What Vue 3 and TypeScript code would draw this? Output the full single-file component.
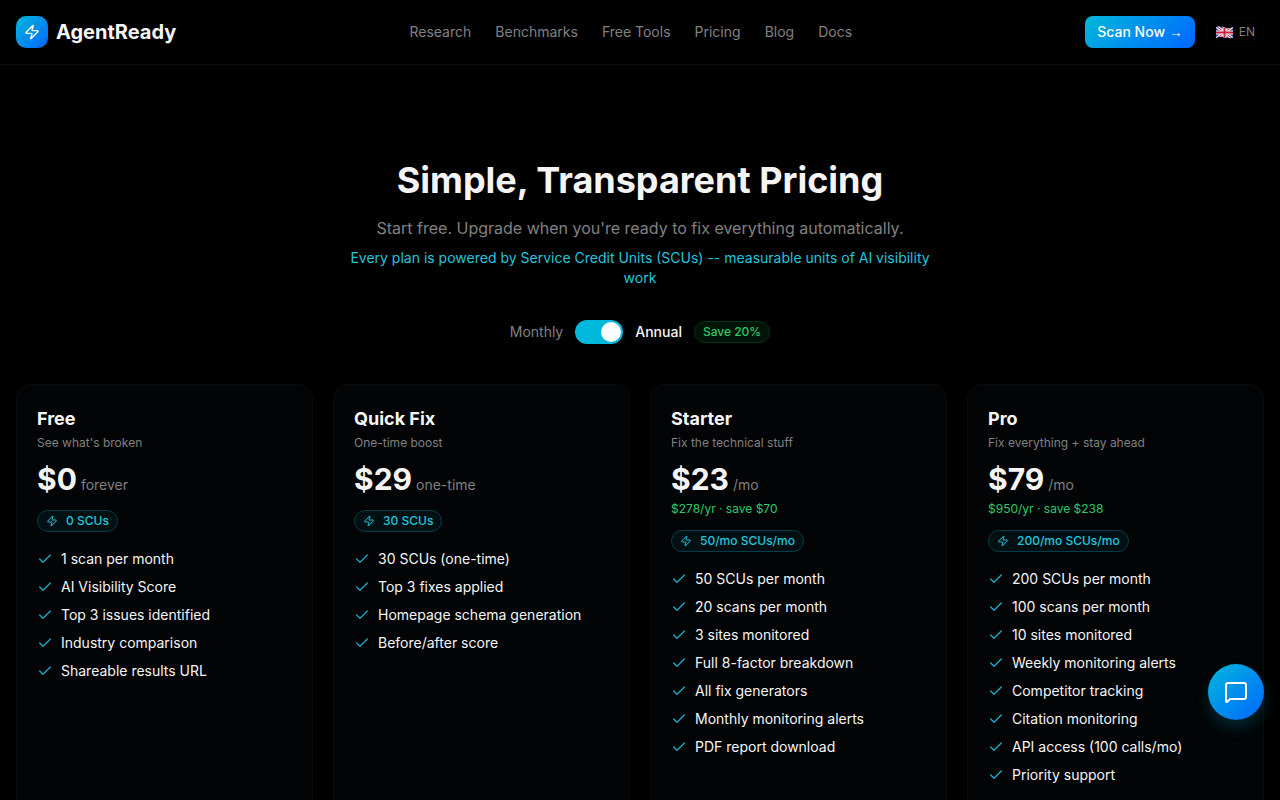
<script setup lang="ts">
import { ref } from 'vue'

interface Plan {
  name: string
  tagline: string
  monthly: string
  annual: string
  period: string
  yearly?: string
  units: string
  features: string[]
}

const annual = ref(true)

const links = ['Research', 'Benchmarks', 'Free Tools', 'Pricing', 'Blog', 'Docs']

const plans: Plan[] = [
  {
    name: 'Free',
    tagline: "See what's broken",
    monthly: '$0',
    annual: '$0',
    period: 'forever',
    units: '0 SCUs',
    features: [
      '1 scan per month',
      'AI Visibility Score',
      'Top 3 issues identified',
      'Industry comparison',
      'Shareable results URL',
    ],
  },
  {
    name: 'Quick Fix',
    tagline: 'One-time boost',
    monthly: '$29',
    annual: '$29',
    period: 'one-time',
    units: '30 SCUs',
    features: [
      '30 SCUs (one-time)',
      'Top 3 fixes applied',
      'Homepage schema generation',
      'Before/after score',
    ],
  },
  {
    name: 'Starter',
    tagline: 'Fix the technical stuff',
    monthly: '$29',
    annual: '$23',
    period: '/mo',
    yearly: '$278/yr · save $70',
    units: '50/mo SCUs/mo',
    features: [
      '50 SCUs per month',
      '20 scans per month',
      '3 sites monitored',
      'Full 8-factor breakdown',
      'All fix generators',
      'Monthly monitoring alerts',
      'PDF report download',
    ],
  },
  {
    name: 'Pro',
    tagline: 'Fix everything + stay ahead',
    monthly: '$99',
    annual: '$79',
    period: '/mo',
    yearly: '$950/yr · save $238',
    units: '200/mo SCUs/mo',
    features: [
      '200 SCUs per month',
      '100 scans per month',
      '10 sites monitored',
      'Weekly monitoring alerts',
      'Competitor tracking',
      'Citation monitoring',
      'API access (100 calls/mo)',
      'Priority support',
    ],
  },
]

const zap =
  'M4 14a1 1 0 0 1-.78-1.63l9.9-10.2a.5.5 0 0 1 .86.46l-1.92 6.02A1 1 0 0 0 13 10h7a1 1 0 0 1 .78 1.63l-9.9 10.2a.5.5 0 0 1-.86-.46l1.92-6.02A1 1 0 0 0 11 14z'
</script>

<template>
  <div class="page">
    <header class="header">
      <a class="brand" href="#">
        <span class="brand-mark">
          <svg class="icon icon-16" viewBox="0 0 24 24" aria-hidden="true"><path :d="zap" /></svg>
        </span>
        AgentReady
      </a>
      <nav class="nav">
        <a v-for="link in links" :key="link" href="#">{{ link }}</a>
      </nav>
      <div class="actions">
        <a class="scan" href="#">Scan Now <span class="arrow">→</span></a>
        <button class="lang" type="button">
          <svg class="flag" viewBox="0 0 34 26" aria-hidden="true">
            <clipPath id="flag-shape">
              <path d="M0 3C6 -1 11 1 17 3S28 5 34 2V23C28 26 23 25 17 23S6 20 0 24Z" />
            </clipPath>
            <g clip-path="url(#flag-shape)">
              <rect width="34" height="26" fill="#2a3f8f" />
              <path d="M0 0 34 26M34 0 0 26" stroke="#f4f4f6" stroke-width="6" />
              <path d="M0 0 34 26M34 0 0 26" stroke="#d0203a" stroke-width="2" />
              <path d="M17 0V26M0 13H34" stroke="#f4f4f6" stroke-width="8" />
              <path d="M17 0V26M0 13H34" stroke="#d0203a" stroke-width="4" />
            </g>
          </svg>
          EN
        </button>
      </div>
    </header>

    <main class="main">
      <section class="intro">
        <h1>Simple, Transparent Pricing</h1>
        <p class="lead">Start free. Upgrade when you're ready to fix everything automatically.</p>
        <p class="note">
          Every plan is powered by Service Credit Units (SCUs) -- measurable units of AI visibility work
        </p>
      </section>

      <div class="billing">
        <span :class="{ active: !annual }">Monthly</span>
        <button
          class="switch"
          :class="{ on: annual }"
          type="button"
          role="switch"
          :aria-checked="annual"
          aria-label="Annual"
          @click="annual = !annual"
        >
          <span class="knob"></span>
        </button>
        <span :class="{ active: annual }">Annual</span>
        <span class="save">Save 20%</span>
      </div>

      <section class="plans">
        <article v-for="plan in plans" :key="plan.name" class="card">
          <h2>{{ plan.name }}</h2>
          <p class="tagline">{{ plan.tagline }}</p>
          <p class="price">
            <strong>{{ annual ? plan.annual : plan.monthly }}</strong>
            <span>{{ plan.period }}</span>
          </p>
          <p v-if="annual && plan.yearly" class="yearly">{{ plan.yearly }}</p>
          <p class="units">
            <svg class="icon icon-12" viewBox="0 0 24 24" aria-hidden="true"><path :d="zap" /></svg>
            {{ plan.units }}
          </p>
          <ul class="features">
            <li v-for="feature in plan.features" :key="feature">
              <svg class="icon icon-16 tick" viewBox="0 0 24 24" aria-hidden="true">
                <path d="M20 6 9 17l-5-5" />
              </svg>
              {{ feature }}
            </li>
          </ul>
        </article>
      </section>
    </main>

    <button class="chat" type="button" aria-label="Chat">
      <svg class="icon icon-24" viewBox="0 0 24 24" aria-hidden="true">
        <path
          d="M22 17a2 2 0 0 1-2 2H6.828a2 2 0 0 0-1.414.586l-2.202 2.202A.71.71 0 0 1 2 21.286V5a2 2 0 0 1 2-2h16a2 2 0 0 1 2 2z"
        />
      </svg>
    </button>
  </div>
</template>

<style>
body {
  margin: 0;
  background: #000;
}
</style>

<style scoped>
.page {
  min-height: 100vh;
  background: #000;
  color: #f5f5f5;
  font-family: Inter, "Liberation Sans", sans-serif;
  font-size: 14px;
  line-height: 20px;
}

h1,
h2,
p,
ul {
  margin: 0;
  padding: 0;
}

a {
  color: inherit;
  text-decoration: none;
}

button {
  border: 0;
  padding: 0;
  color: inherit;
  font: inherit;
  cursor: pointer;
}

.icon {
  flex: none;
  fill: none;
  stroke: currentColor;
  stroke-width: 2;
  stroke-linecap: round;
  stroke-linejoin: round;
}

.icon-12 {
  width: 12px;
  height: 12px;
}

.icon-16 {
  width: 16px;
  height: 16px;
}

.icon-24 {
  width: 24px;
  height: 24px;
}

.header {
  display: flex;
  align-items: center;
  justify-content: space-between;
  height: 64px;
  padding: 0 16px;
  border-bottom: 1px solid #0d0d0d;
}

.brand {
  display: flex;
  align-items: center;
  gap: 8px;
  font-size: 20px;
  font-weight: 700;
  line-height: 28px;
}

.brand-mark {
  display: flex;
  align-items: center;
  justify-content: center;
  width: 32px;
  height: 32px;
  border-radius: 10px;
  background: linear-gradient(135deg, #00b8db, #0066ff);
  color: #fff;
}

.nav {
  display: flex;
  gap: 24px;
  color: #808080;
}

.actions {
  display: flex;
  align-items: center;
  gap: 12px;
}

.scan {
  padding: 6px 12px;
  border-radius: 8px;
  background: linear-gradient(135deg, #00b8db, #0066ff);
  color: #fff;
  font-weight: 500;
}

.arrow {
  font-family: "Liberation Sans", sans-serif;
}

.lang {
  display: flex;
  align-items: center;
  gap: 6px;
  padding: 6px 8px;
  border: 1px solid #060606;
  border-radius: 8px;
  background: transparent;
  color: #808080;
  font-size: 12px;
  line-height: 16px;
}

.flag {
  width: 17px;
  height: 13px;
}

.main {
  padding: 95px 16px 80px;
}

.intro {
  max-width: 600px;
  margin: 0 auto;
  text-align: center;
}

h1 {
  font-size: 36px;
  font-weight: 700;
  line-height: 40px;
}

.lead {
  margin-top: 16px;
  color: #808080;
  font-size: 16px;
  line-height: 24px;
}

.note {
  margin-top: 8px;
  color: #22c5de;
}

.billing {
  display: flex;
  align-items: center;
  justify-content: center;
  gap: 12px;
  margin: 32px 0 40px;
  color: #808080;
}

.billing .active {
  color: #f5f5f5;
  font-weight: 500;
}

.switch {
  display: flex;
  width: 48px;
  height: 24px;
  box-sizing: border-box;
  padding: 2px;
  border-radius: 12px;
  background: #262626;
}

.switch.on {
  justify-content: flex-end;
  background: #00b8db;
}

.knob {
  width: 20px;
  height: 20px;
  border-radius: 50%;
  background: #fff;
}

.save {
  padding: 2px 8px;
  border: 1px solid #05331a;
  border-radius: 11px;
  background: #001407;
  color: #2cc96a;
  font-size: 12px;
  font-weight: 500;
  line-height: 16px;
}

.plans {
  display: grid;
  grid-template-columns: repeat(4, minmax(0, 1fr));
  gap: 20px;
}

.card {
  padding: 20px 20px 80px;
  border: 1px solid #090b0c;
  border-radius: 14px;
  background: #020405;
}

h2 {
  font-size: 18px;
  font-weight: 700;
  line-height: 28px;
}

.tagline {
  margin-top: 2px;
  color: #808080;
  font-size: 12px;
  line-height: 16px;
}

.price {
  display: flex;
  align-items: baseline;
  gap: 4px;
  margin-top: 10px;
  color: #808080;
}

.price strong {
  color: #f5f5f5;
  font-size: 30px;
  font-weight: 700;
  line-height: 36px;
}

.yearly {
  margin-top: 4px;
  color: #2cc96a;
  font-size: 12px;
  line-height: 16px;
}

.units {
  display: flex;
  align-items: center;
  gap: 8px;
  width: fit-content;
  margin-top: 13px;
  padding: 2px 8px;
  border: 1px solid #043d49;
  border-radius: 11px;
  background: #021014;
  color: #22c5de;
  font-size: 12px;
  font-weight: 500;
  line-height: 16px;
}

.features {
  display: grid;
  gap: 8px;
  margin-top: 17px;
  list-style: none;
}

.features li {
  display: flex;
  align-items: center;
  gap: 8px;
}

.tick {
  color: #19a9c4;
}

.chat {
  position: fixed;
  right: 16px;
  bottom: 80px;
  display: flex;
  align-items: center;
  justify-content: center;
  width: 56px;
  height: 56px;
  border-radius: 50%;
  background: linear-gradient(135deg, #00b8db, #0066ff);
  box-shadow: 0 8px 16px rgba(0, 184, 219, 0.2);
  color: #fff;
}
</style>
